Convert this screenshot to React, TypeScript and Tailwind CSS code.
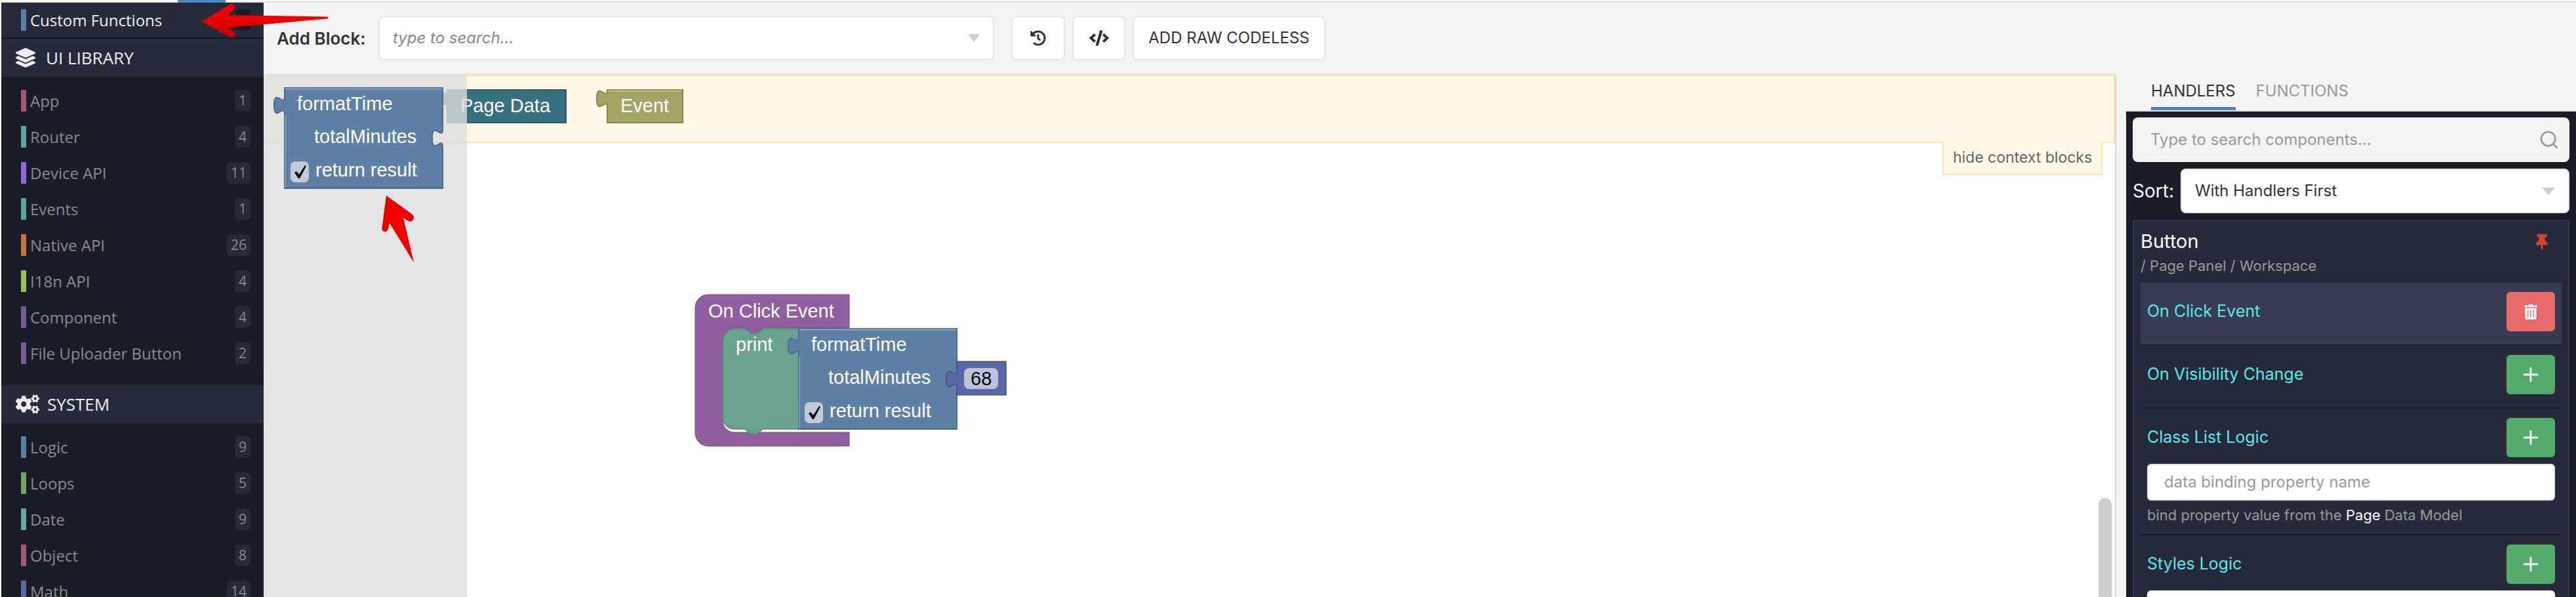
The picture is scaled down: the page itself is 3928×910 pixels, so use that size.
import { FaCode, FaCogs, FaHistory, FaLayerGroup, FaThumbtack, FaTrashAlt } from "react-icons/fa";
import { FiSearch } from "react-icons/fi";
import { Plus } from "lucide-react";

const uiLibrary = [
  { name: "App", count: 1, color: "bg-[#a55b6e]" },
  { name: "Router", count: 4, color: "bg-[#5ba5a5]" },
  { name: "Device API", count: 11, color: "bg-[#9a65d8]" },
  { name: "Events", count: 1, color: "bg-[#5ba599]" },
  { name: "Native API", count: 26, color: "bg-[#c9713a]" },
  { name: "I18n API", count: 4, color: "bg-[#97c05c]" },
  { name: "Component", count: 4, color: "bg-[#7a5a96]" },
  { name: "File Uploader Button", count: 2, color: "bg-[#7a5a96]" },
];

const system = [
  { name: "Logic", count: 9, color: "bg-[#5b80a5]" },
  { name: "Loops", count: 5, color: "bg-[#6ea565]" },
  { name: "Date", count: 9, color: "bg-[#6aa5a8]" },
  { name: "Object", count: 8, color: "bg-[#a55b6e]" },
  { name: "Math", count: 14, color: "bg-[#5b67a5]" },
];

function SideRow({ name, count, color }: { name: string; count: number; color: string }) {
  return (
    <div className="flex h-[55px] items-center pl-[30px] pr-[20px]">
      <div className={`h-[33px] w-[8px] ${color}`} />
      <div className="ml-[6px] flex-1 text-[24px] text-[#8a8a8a]">{name}</div>
      <div className="flex h-[33px] items-center rounded-[6px] bg-[#252b3b] px-[6px] text-[21px] text-[#8a8a8a]">{count}</div>
    </div>
  );
}

function Sidebar() {
  return (
    <aside className="ml-[2px] w-[400px] shrink-0 overflow-hidden bg-[#1a1d28] font-['Open_Sans',sans-serif]">
      <div className="flex h-[53px] items-center bg-[#252b3b] pl-[30px] pr-[20px]">
        <div className="h-[33px] w-[8px] bg-[#5b80a5]" />
        <div className="ml-[6px] flex-1 text-[24px] text-[#f0f0f0]">Custom Functions</div>
        <div className="h-[33px] w-[22px] rounded-[6px] bg-[#1a1d28]" />
      </div>
      <div className="h-[2px] bg-[#161922]" />
      <div className="flex h-[58px] items-center bg-[#252b3b] pl-[22px] text-[26px] text-[#f0f0f0]">
        <FaLayerGroup className="h-[30px] w-[30px] text-[#eee]" />
        <span className="ml-[16px]">UI LIBRARY</span>
      </div>
      <div className="py-[9px]">
        {uiLibrary.map((item) => (
          <SideRow key={item.name} {...item} />
        ))}
      </div>
      <div className="h-[2px] bg-[#161922]" />
      <div className="mt-[10px] flex h-[58px] items-center bg-[#252b3b] pl-[22px] text-[26px] text-[#f0f0f0]">
        <FaCogs className="h-[36px] w-[36px] text-[#eee]" />
        <span className="ml-[12px]">SYSTEM</span>
      </div>
      <div className="pt-[9px]">
        {system.map((item) => (
          <SideRow key={item.name} {...item} />
        ))}
      </div>
    </aside>
  );
}

const tab = "c 0,18 -16,-14 -16,13.5 s 16,-4.5 16,13.5";
const tabUp = "c 0,-18 -16,14 -16,-13.5 s 16,4.5 16,-13.5";
const sans = "'Liberation Sans', Arial, sans-serif";

function FormatTime({ x, y }: { x: number; y: number }) {
  return (
    <g transform={`translate(${x} ${y})`} fontFamily={sans} fontSize="29" fill="#fff">
      <path d={`M0,0 H241 V63 ${tab} V153 H0 V40 ${tabUp} V0 z`} fill="#5f80a5" stroke="#4a6a8f" strokeWidth="2" />
      <path d="M1,1.5 H240" stroke="#8ea5bf" strokeWidth="2" />
      <path d="M1,42 V152" stroke="#8ea5bf" strokeWidth="1.5" />
      <text x="19" y="34">formatTime</text>
      <text x="45" y="84">totalMinutes</text>
      <rect x="9" y="112" width="28" height="32" rx="7" fill="#bfcbdb" />
      <path d="M15,129 L18,127 L22,132 L31,118 L33,119 L23,138 L21,138 z" fill="#000" />
      <text x="47" y="135">return result</text>
    </g>
  );
}

function Blocks() {
  return (
    <svg className="absolute left-0 top-0 h-[797px] w-[2825px]" viewBox="402 113 2825 797" fontFamily={sans} fontSize="29" fill="#fff">
      {/* context blocks */}
      <path d={`M682,136 H863 V186 H682 V163 ${tabUp} V136 z`} fill="#37717f" stroke="#2c5a66" strokeWidth="2" />
      <text x="702" y="170">Page Data</text>
      <path d={`M926,136 H1041 V186 H926 V163 ${tabUp} V136 z`} fill="#a3a465" stroke="#838350" strokeWidth="2" />
      <path d="M927,137.5 H1040" stroke="#bfc08f" strokeWidth="2" />
      <text x="946" y="170">Event</text>

      {/* on click event */}
      <path
        d="M1080,448 H1295 V499 H1163 l-9,8 h-9 l-9,-8 H1120 a18,18 0 0 0 -18,18 V640 a18,18 0 0 0 18,18 H1295 V679 H1080 a20,20 0 0 1 -20,-20 V468 a20,20 0 0 1 20,-20 z"
        fill="#915f9f"
        stroke="#744c7f"
        strokeWidth="1"
      />
      <text x="1080" y="483">On Click Event</text>

      {/* print */}
      <path
        d="M1120,500 H1136 l9,7 h9 l9,-7 H1218 V653 H1163 l-9,8 h-9 l-9,-8 H1120 a18,18 0 0 1 -18,-18 V518 a18,18 0 0 1 18,-18 z"
        fill="#6ba28d"
        stroke="#568271"
        strokeWidth="1.5"
      />
      <text x="1122" y="534">print</text>

      <FormatTime x={1218} y={500} />

      {/* number */}
      <path d={`M1459,550 H1534 V601 H1459 V590 ${tabUp} V550 z`} fill="#5b67a5" stroke="#495284" strokeWidth="1.5" />
      <rect x="1470" y="560" width="52" height="32" rx="8" fill="#bdc2db" />
      <text x="1480" y="586" fill="#000">68</text>
    </svg>
  );
}

function Workspace() {
  return (
    <div className="relative flex-1 overflow-hidden border-r-2 border-[#d8d8d8] bg-white">
      <div className="h-[104px] border-y-2 border-r-2 border-[#fbe6a8] bg-[#fff8e7]" />
      <div className="flex justify-end pr-[19px]">
        <div className="-mt-[2px] flex h-[51px] w-[244px] items-center justify-center border-x-2 border-b-2 border-[#fbe6a8] bg-[#fff8e7] font-['Inter',sans-serif] text-[23px] text-[#666]">
          hide context blocks
        </div>
      </div>
      <Blocks />
      <div className="absolute left-0 top-0 h-full w-[310px] bg-[#ddd]/80" />
      <svg className="absolute left-0 top-0 h-[797px] w-[400px]" viewBox="402 113 400 797">
        <FormatTime x={434} y={133} />
      </svg>
      <div className="absolute right-[5px] top-[645px] h-[260px] w-[20px] rounded-full bg-[#ccc]" />
    </div>
  );
}

function ToolButton({ width, children }: { width: string; children: React.ReactNode }) {
  return (
    <button className={`flex h-[68px] items-center justify-center rounded-[8px] border-2 border-[#e3e6e9] bg-white text-[24px] text-[#333] ${width}`}>
      {children}
    </button>
  );
}

function Toolbar() {
  return (
    <div className="flex h-[110px] shrink-0 items-center border-b-2 border-[#e6e6e6] bg-[#f3f3f3] pl-[20px] font-['Inter',sans-serif]">
      <div className="w-[155px] whitespace-nowrap text-[26px] font-semibold text-[#333]">Add Block:</div>
      <div className="flex h-[68px] w-[939px] items-center justify-between rounded-[8px] border-2 border-[#e3e6e9] bg-white px-[20px]">
        <span className="text-[24px] italic text-[#888]">type to search...</span>
        <span className="h-0 w-0 border-x-[9px] border-t-[12px] border-x-transparent border-t-[#ccc]" />
      </div>
      <div className="ml-[26px] flex gap-[11px]">
        <ToolButton width="w-[82px]">
          <FaHistory className="h-[24px] w-[24px]" />
        </ToolButton>
        <ToolButton width="w-[81px]">
          <FaCode className="h-[24px] w-[30px]" />
        </ToolButton>
        <ToolButton width="w-[294px]">ADD RAW CODELESS</ToolButton>
      </div>
    </div>
  );
}

function Handler({ title, active, last, children }: { title: string; active?: boolean; last?: boolean; children?: React.ReactNode }) {
  return (
    <div className={`${last ? "" : "border-b-2 border-[#1a1d28]"} ${active ? "bg-[#373c50]" : ""} px-[10px]`}>
      <div className={`flex items-center justify-between ${active ? "h-[94px] pb-[6px]" : "h-[60px]"}`}>
        <span className="text-[25px] text-[#5ee7e7]">{title}</span>
        <div className={`flex h-[60px] w-[74px] items-center justify-center rounded-[6px] ${active ? "bg-[#e86a6a]" : "bg-[#54a96d]"}`}>
          {active ? <FaTrashAlt className="h-[25px] w-[20px] text-white" /> : <Plus className="h-[34px] w-[34px] text-white" />}
        </div>
      </div>
      {children}
    </div>
  );
}

function RightPanel() {
  return (
    <div className="flex w-[701px] shrink-0 flex-col bg-[#f3f3f3] font-['Inter',sans-serif]">
      <div className="flex h-[164px] shrink-0 gap-[31px] pl-[53px] pt-[118px] text-[24px] leading-[34px]">
        <div className="h-[47px] border-b-[6px] border-[#4e88bb] text-[#333]">HANDLERS</div>
        <div className="text-[#999]">FUNCTIONS</div>
      </div>
      <div className="ml-[15px] min-h-0 flex-1 overflow-hidden border-t-2 border-[#e0e0e0] bg-[#1a1d28] px-[10px] pt-[9px]">
        <div className="flex h-[68px] items-center justify-between rounded-[8px] bg-[#f3f3f3] pl-[27px] pr-[15px] text-[24px] text-[#999]">
          <span>Type to search components...</span>
          <FiSearch className="h-[32px] w-[32px]" />
        </div>
        <div className="mt-[10px] flex items-center gap-[11px]">
          <span className="w-[62px] text-[28px] text-white">Sort:</span>
          <div className="flex h-[68px] flex-1 items-center justify-between rounded-[8px] border-2 border-[#e3e6e9] bg-white px-[20px] text-[24px] text-[#333]">
            <span>With Handlers First</span>
            <span className="h-0 w-0 border-x-[10px] border-t-[11px] border-x-transparent border-t-[#ccc]" />
          </div>
        </div>
        <div className="mt-[10px] h-[600px] border-2 border-[#32394f] bg-[#252b3b] px-[10px]">
          <div className="relative h-[94px] pt-[9px]">
            <div className="text-[29px] leading-[44px] text-white">Button</div>
            <div className="text-[22px] leading-[31px] text-[#999]">/ Page Panel / Workspace</div>
            <FaThumbtack className="absolute right-[20px] top-[20px] h-[24px] w-[20px] text-[#d2452a]" />
          </div>
          <Handler title="On Click Event" active />
          <div className="h-[14px]" />
          <Handler title="On Visibility Change">
            <div className="h-[20px]" />
          </Handler>
          <div className="h-[14px]" />
          <Handler title="Class List Logic">
            <div className="mt-[10px] flex h-[56px] items-center rounded-[6px] border-2 border-[#e3e6e9] bg-white pl-[24px] text-[24px] text-[#999]">
              data binding property name
            </div>
            <div className="mt-[6px] h-[45px] text-[22px] text-[#999]">
              bind property value from the <span className="text-white">Page</span> Data Model
            </div>
          </Handler>
          <div className="h-[14px]" />
          <Handler title="Styles Logic" last>
            <div className="mt-[10px] h-[56px] rounded-[6px] bg-white" />
          </Handler>
        </div>
      </div>
    </div>
  );
}

function Arrows() {
  return (
    <svg className="pointer-events-none absolute left-0 top-0 h-[420px] w-[700px]" viewBox="0 0 700 420">
      <defs>
        <linearGradient id="redA" x1="0" y1="1" x2="0.6" y2="0">
          <stop offset="0" stopColor="#c00000" />
          <stop offset="0.6" stopColor="#ee0000" />
          <stop offset="1" stopColor="#f50000" />
        </linearGradient>
        <linearGradient id="redB" x1="0" y1="0" x2="1" y2="0">
          <stop offset="0" stopColor="#e00000" />
          <stop offset="0.5" stopColor="#f80000" />
          <stop offset="1" stopColor="#e80000" />
        </linearGradient>
      </defs>
      <path
        d="M307,33 L350,7 Q356,4 358,10 Q358,13 356,15 L348,23 L500,25.5 Q501,27 500,28.5 L348,42 L358,50 Q360,54 357,56 Q353,58 350,56 Z"
        fill="url(#redA)"
      />
      <path
        d="M589,298 L629,327 Q632,331 630,335 Q627,339 623,337 L615,332 L631,400 L594,340 L592,349 Q590,354 586,353 Q582,352 582.5,348 Z"
        fill="url(#redB)"
      />
    </svg>
  );
}

export default function App() {
  return (
    <div className="relative flex h-[910px] w-[3928px] flex-col overflow-hidden bg-white">
      <div className="h-[4px] shrink-0 border-b-2 border-[#e0e0e0] bg-[#f8f8f8]">
        <div className="ml-[271px] h-[4px] w-[73px] bg-[#4e88bb]" />
      </div>
      <div className="flex min-h-0 flex-1">
        <Sidebar />
        <div className="flex min-w-0 flex-1 flex-col">
          <Toolbar />
          <Workspace />
        </div>
        <RightPanel />
      </div>
      <Arrows />
    </div>
  );
}
